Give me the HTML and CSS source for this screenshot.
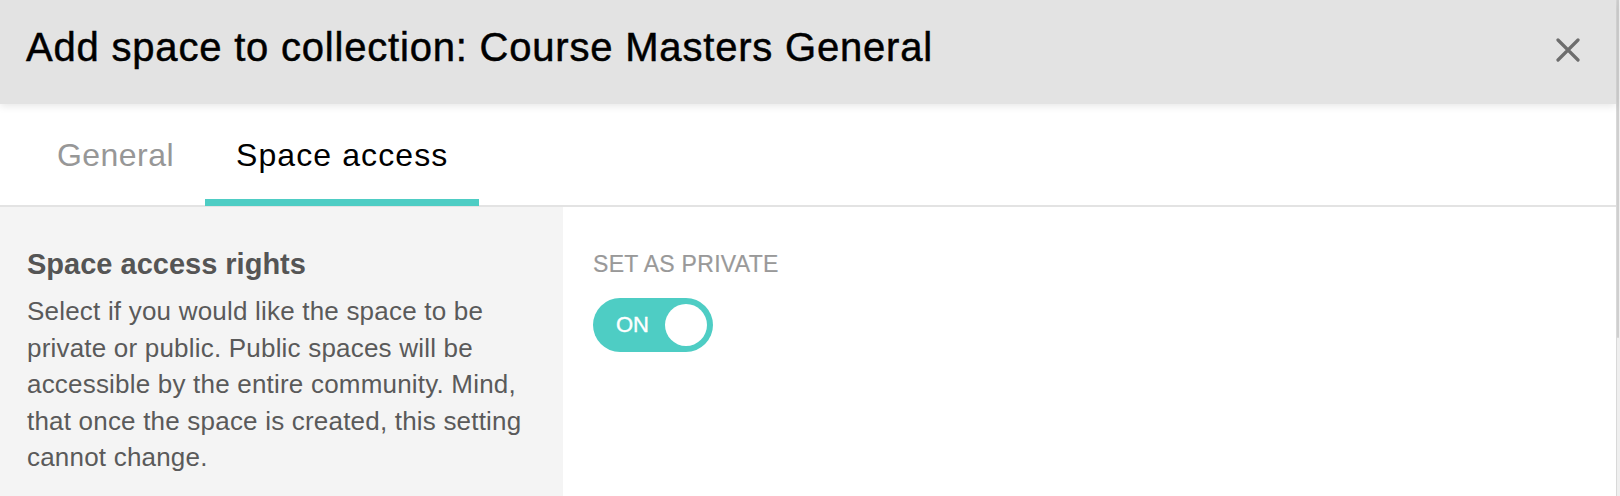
FILE: index.html
```html
<!DOCTYPE html>
<html lang="en">
<head>
<meta charset="utf-8">
<title>Add space to collection</title>
<link rel="stylesheet" href="styles.css">
</head>
<body>
<div class="page">
  <div class="dialog">
    <header class="dialog-header">
      <h1 class="dialog-title">Add space to collection: Course Masters General</h1>
      <button class="close-btn" aria-label="Close">
        <svg width="24" height="24" viewBox="0 0 24 24"><path d="M2 2 L22 22 M22 2 L2 22" stroke="#6d6d6d" stroke-width="3.2" stroke-linecap="round" fill="none"/></svg>
      </button>
    </header>
    <nav class="tabs">
      <div class="tab">General</div>
      <div class="tab tab-active">Space access</div>
    </nav>
    <div class="content">
      <aside class="side">
        <h2 class="side-title">Space access rights</h2>
        <p class="side-text">Select if you would like the space to be private or public. Public spaces will be accessible by the entire community. Mind, that once the space is created, this setting cannot change.</p>
      </aside>
      <section class="main">
        <div class="field-label">SET AS PRIVATE</div>
        <div class="toggle">
          <span class="toggle-text">ON</span>
          <span class="toggle-knob"></span>
        </div>
      </section>
    </div>
  </div>
  <div class="scrollbar"><div class="scroll-thumb"></div></div>
</div>
</body>
</html>
```
FILE: styles.css
```css
* { box-sizing: border-box; }
html, body { margin: 0; padding: 0; }
body {
  font-family: "Liberation Sans", Arial, Helvetica, sans-serif;
  background: #fff;
  width: 1620px;
  height: 496px;
  overflow: hidden;
}
.page {
  display: flex;
  height: 496px;
}
.dialog {
  flex: 1;
  display: flex;
  flex-direction: column;
  min-width: 0;
}
.dialog-header {
  height: 104px;
  background: #e3e3e3;
  display: flex;
  justify-content: space-between;
  align-items: flex-start;
  padding: 24px 36px 0 26px;
  box-shadow: 0 2px 8px rgba(0,0,0,0.10);
  position: relative;
  z-index: 1;
}
.dialog-title {
  margin: 0;
  font-size: 40px;
  line-height: 46px;
  font-weight: normal;
  letter-spacing: 0.8px;
  color: #000;
  -webkit-text-stroke: 0.5px #000;
}
.close-btn {
  margin-top: 14px;
  padding: 0;
  border: 0;
  background: none;
  width: 24px;
  height: 24px;
  display: block;
}
.close-btn svg { display: block; }
.tabs {
  display: flex;
  padding-left: 26px;
  border-bottom: 2px solid #e3e3e3;
}
.tab {
  position: relative;
  padding: 31px 31px 30px;
  font-size: 32px;
  line-height: 40px;
  letter-spacing: 0.45px;
  color: #979797;
}
.tab-active {
  color: #000;
  letter-spacing: 1.1px;
}
.tab-active::after {
  content: "";
  position: absolute;
  left: 0;
  right: 0;
  bottom: -1px;
  height: 7px;
  background: #4ecdc4;
}
.content {
  flex: 1;
  display: flex;
}
.side {
  width: 563px;
  background: #f4f4f4;
  padding: 39px 27px 0;
}
.side-title {
  margin: 0;
  font-size: 29px;
  line-height: 36px;
  font-weight: bold;
  color: #555;
}
.side-text {
  margin: 11px 0 0;
  font-size: 26px;
  line-height: 36.5px;
  letter-spacing: 0.2px;
  color: #5a5a5a;
}
.main {
  flex: 1;
  padding: 43px 30px 0;
}
.field-label {
  font-size: 23px;
  line-height: 28px;
  letter-spacing: 0.3px;
  color: #999;
  -webkit-text-stroke: 0.2px #999;
}
.toggle {
  margin-top: 20px;
  width: 120px;
  height: 54px;
  border-radius: 27px;
  background: #4ecdc4;
  display: flex;
  align-items: center;
  justify-content: space-between;
  padding: 0 6px 0 23px;
}
.toggle-text {
  color: #fff;
  font-size: 22px;
  line-height: 24px;
  -webkit-text-stroke: 0.4px #fff;
}
.toggle-knob {
  width: 42px;
  height: 42px;
  border-radius: 50%;
  background: #fff;
}
.scrollbar {
  width: 4px;
  background: #efefef;
  border-left: 1px solid #d9d9d9;
}
.scroll-thumb {
  width: 2px;
  height: 338px;
  background: #cfcfcf;
  border-radius: 0 0 2px 2px;
}
```
